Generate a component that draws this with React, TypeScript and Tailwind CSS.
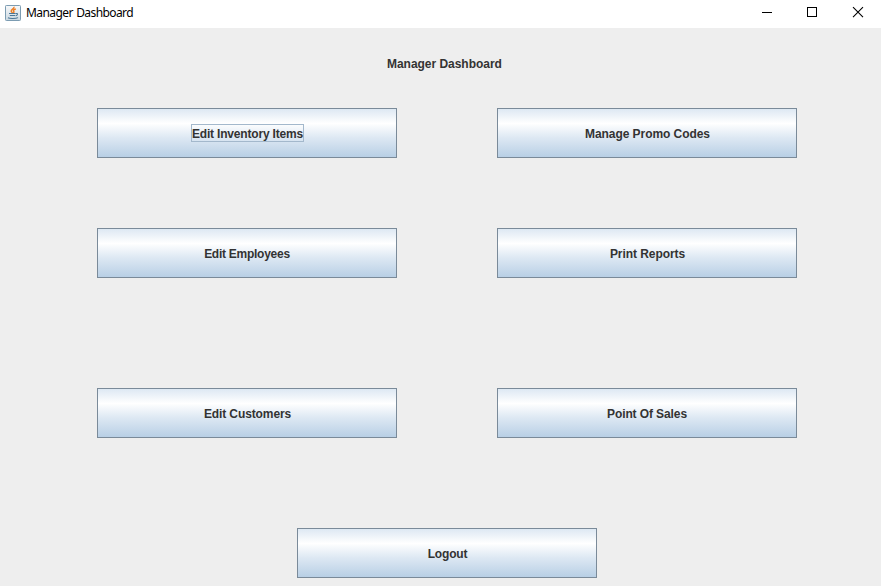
import React from "react";

type ButtonProps = { label: string; focused?: boolean; tracking?: string };

function MetalButton({ label, focused = false, tracking = "" }: ButtonProps) {
  return (
    <button
      type="button"
      className="flex h-[50px] w-[300px] items-center justify-center border border-[#7a8a99] bg-[linear-gradient(to_bottom,#dde8f3_0%,#ffffff_30%,#dde8f3_60%,#b8cfe5_100%)] text-[12px] leading-[16px] font-bold text-[#333333]"
    >
      <span
        className={`flex h-[18px] items-center justify-center border pt-[2px] whitespace-nowrap ${
          focused ? "w-[113px] border-[#a3b8cc] pl-px" : "border-transparent"
        } ${tracking}`}
      >
        {label}
      </span>
    </button>
  );
}

function JavaIcon() {
  return (
    <svg width="16" height="16" viewBox="0 0 16 16" fill="none">
      <defs>
        <linearGradient id="tile" x1="0" y1="0" x2="0" y2="1">
          <stop offset="0" stopColor="#f8f9fa" />
          <stop offset="1" stopColor="#cbd8e1" />
        </linearGradient>
      </defs>
      <rect x="0.5" y="0.5" width="15" height="15" rx="0.8" fill="url(#tile)" stroke="#7c9cb2" />
      <path
        d="M9 1.8C9.6 3.8 5.6 4.4 6.2 6.2C6.4 6.9 7.2 7.2 7.3 8M10.8 4C8.4 4.6 7.9 5.5 8.7 6.3C9.3 7 8.8 7.7 8.2 8.2"
        stroke="#ee7d22"
        strokeWidth="1.4"
      />
      <path
        d="M4 8.5H10.5M4.8 10.5H10.2M10.8 8.5C13.2 8 12.9 10.2 10.8 10.7M3 12.8C4.5 13.8 11 13.8 13 12.6"
        stroke="#4a7696"
        strokeWidth="1.05"
      />
    </svg>
  );
}

export default function App() {
  return (
    <div className="flex h-[586px] w-[881px] flex-col overflow-hidden bg-[#eeeeee] font-['Liberation_Sans',Arial,sans-serif]">
      <header className="flex h-[28px] shrink-0 items-start bg-white">
        <div className="flex grow items-center pt-[4px] pl-[5px]">
          <JavaIcon />
          <span className="ml-[5px] font-['Noto_Sans',sans-serif] text-[12px] leading-[18px] tracking-[-0.58px] [word-spacing:0.8px] text-black">
            Manager Dashboard
          </span>
        </div>
        <div className="flex">
          <button type="button" aria-label="Minimize" className="flex h-[24px] w-[46px] justify-center">
            <svg width="12" height="24" shapeRendering="crispEdges"><path d="M1 12h10v1H1z" fill="#000" /></svg>
          </button>
          <button type="button" aria-label="Maximize" className="flex h-[24px] w-[45px] justify-center">
            <svg width="11" height="24" shapeRendering="crispEdges"><path d="M.5 7.5h9v9h-9z" fill="none" stroke="#000" /></svg>
          </button>
          <button type="button" aria-label="Close" className="flex h-[24px] w-[46px] justify-center">
            <svg width="12" height="24"><path d="M1 7.2l10 10M11 7.2l-10 10" stroke="#000" strokeWidth="1.1" /></svg>
          </button>
        </div>
      </header>
      <main className="flex flex-col pl-[97px]">
        <h1 className="mt-[27px] ml-[290px] h-[18px] text-[12px] leading-[18px] font-bold tracking-[-0.03px] text-[#333333]">
          Manager Dashboard
        </h1>
        <div className="mt-[35px] flex gap-[100px]">
          <MetalButton label="Edit Inventory Items" focused tracking="tracking-[-0.18px]" />
          <MetalButton label="Manage Promo Codes" tracking="tracking-[-0.06px] pl-px" />
        </div>
        <div className="mt-[70px] flex gap-[100px]">
          <MetalButton label="Edit Employees" tracking="tracking-[-0.26px]" />
          <MetalButton label="Print Reports" tracking="tracking-[-0.07px] pl-px" />
        </div>
        <div className="mt-[110px] flex gap-[100px]">
          <MetalButton label="Edit Customers" tracking="tracking-[-0.11px] pl-px" />
          <MetalButton label="Point Of Sales" tracking="tracking-[-0.1px]" />
        </div>
        <div className="mt-[90px] ml-[200px] flex">
          <MetalButton label="Logout" tracking="tracking-[-0.15px] pl-px" />
        </div>
      </main>
    </div>
  );
}
